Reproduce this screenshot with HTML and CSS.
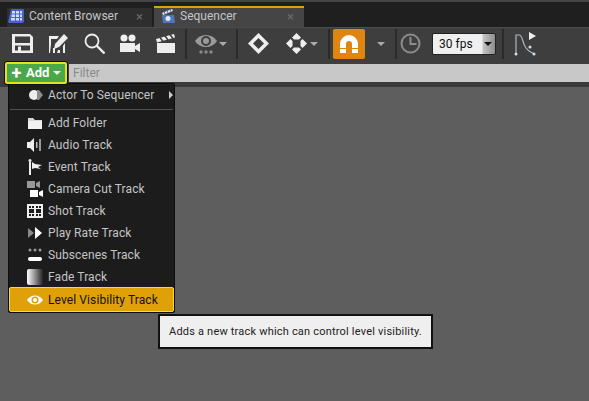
FILE: index.html
```html
<!DOCTYPE html>
<html>
  <head>
    <meta charset="utf-8" />
    <title>Sequencer</title>
    <link rel="stylesheet" href="styles.css">
  </head>

  <body>
    <!-- タブ -->
    <div class="tabbar">
      <div class="tab">
        <svg class="tab-icon" viewBox="0 0 16 16"><path d="M3 1h12l1 1v12l-1 1H1l-1-1z" fill="#4a62c8"/><path d="M4 3h3v2.500H4zM8 3h3v2.500H8zM12 3h2v2.500h-2zM3.500 6.500h3.500V9H3.500zM8 6.500h3V9H8zM12 6.500h2V9h-2zM3 10h4v2.500H3zM8 10h3v2.500H8zM12 10h2v2.500h-2z" fill="#d4ddf6"/></svg>
        <span class="tab-label">Content Browser</span>
        <span class="tab-close">×</span>
      </div>
      <div class="tab tab-active">
        <svg class="tab-icon" viewBox="0 0 16 16"><path d="M2 5l10-4 1 2-10 4z" fill="#e4e9f2"/><path d="M2 7h12l1 8H3z" fill="#4f78bc"/><circle cx="8" cy="10.500" r="2.500" fill="#e4e9f2"/><path d="M4 3l1 3M7 2l1 3M10 1l1 3" stroke="#4f78bc"/></svg>
        <span class="tab-label">Sequencer</span>
        <span class="tab-close">×</span>
      </div>
    </div>

    <!-- ツールバー -->
    <div class="toolbar">
      <svg class="tool" viewBox="0 0 21 21"><path d="M0 1h18l3 3v16H0zM3 3.500V10h15V3.500zM3 12.500V17.500h3v-4h3v4h9v-5z" fill="#eee" fill-rule="evenodd"/></svg>
      <svg class="tool gap-15" viewBox="0 0 21 21"><path d="M1 3h10l-2 3H3v5l-1 9H1zM12 20H9l1-3h2zM17 10v10h-2v-7zM5 15h2v5H5z" fill="#eee"/><path d="M7 11L16 1l4 4-9 9-5 2z" fill="#eee"/></svg>
      <svg class="tool gap-15" viewBox="0 0 21 21"><circle cx="8" cy="8" r="6.500" fill="none" stroke="#eee" stroke-width="1.800"/><path d="M12.500 12.500l8 8" stroke="#eee" stroke-width="2.400"/></svg>
      <svg class="tool gap-14" viewBox="0 0 21 21"><circle cx="5" cy="5" r="3.500" fill="#eee"/><circle cx="13" cy="5" r="3.500" fill="#eee"/><path d="M1 10h15v9H1zM16 13l5-3v9l-5-3z" fill="#eee"/></svg>
      <svg class="tool gap-15" viewBox="0 0 21 21"><path d="M2 10h18v10H2z" fill="#eee"/><path d="M1 6l18-5 1 3.500-18 5z" fill="#eee"/><path d="M5 4.500l3 4M10 3l3 4M15 1.500l3 4" stroke="#3e3e3e" stroke-width="1.500"/></svg>
      <span class="sep gap-9"></span>
      <svg class="tool tool-wide gap-8" viewBox="0 0 22 22"><path d="M0 8c5-8 17-8 22 0-5 8-17 8-22 0z" fill="#9a9a9a"/><circle cx="11" cy="8" r="5" fill="#3e3e3e"/><circle cx="11" cy="8" r="3" fill="#9a9a9a"/><circle cx="6" cy="19" r="1.700" fill="#8a8a8a"/><circle cx="11" cy="19" r="1.700" fill="#8a8a8a"/><circle cx="16" cy="19" r="1.700" fill="#8a8a8a"/></svg>
      <span class="caret caret-dim gap-2"></span>
      <span class="sep gap-9"></span>
      <svg class="tool gap-10" viewBox="0 0 21 21"><path d="M10.500 0L21 10.500 10.500 21 0 10.500zM10.500 5L5 10.500l5.500 5.500 5.500-5.500z" fill="#eee" fill-rule="evenodd"/></svg>
      <svg class="tool gap-17" viewBox="0 0 21 21"><path d="M10.500 0L15 4.500l-2 2h-5l-2-2zM4.500 6l2 2v5l-2 2L0 10.500zM16.500 6L21 10.500 16.500 15l-2-2V8zM8 14.500h5l2 2-4.500 4.500L6 16.500z" fill="#eee"/></svg>
      <span class="caret caret-dim gap-3"></span>
      <span class="sep gap-10"></span>
      <span class="snap gap-3">
        <svg viewBox="0 0 20 20" width="20" height="20"><path d="M1 19v-9a9 9 0 0 1 18 0v9h-6v-9a3 3 0 0 0-6 0v9z" fill="#fff"/><path d="M1 14h6v1H1zM13 14h6v1h-6z" fill="#e08512"/></svg>
      </span>
      <span class="caret caret-dim gap-12"></span>
      <span class="sep gap-10"></span>
      <svg class="tool gap-3" viewBox="0 0 21 21"><circle cx="10.500" cy="10.500" r="9" fill="none" stroke="#8c8c8c" stroke-width="2"/><path d="M10.500 4v7h6" fill="none" stroke="#8c8c8c" stroke-width="2"/></svg>
      <span class="fps gap-11">
        <span class="fps-value">30 fps</span>
        <span class="fps-arrow"></span>
      </span>
      <span class="sep gap-6"></span>
      <svg class="tool tool-curve gap-9" viewBox="0 0 24 24"><path d="M3 22V3h3c4 0 3 8 7 13 2 3 5 4 8 6" fill="none" stroke="#aeb8c0" stroke-width="1.200"/><path d="M16 0l7 4-7 4z" fill="#eee"/><circle cx="3" cy="22" r="1.500" fill="#cfe0ea"/><circle cx="21" cy="22" r="1.500" fill="#cfe0ea"/><circle cx="17" cy="15" r="1.500" fill="#cfe0ea"/></svg>
    </div>

    <!-- フィルター -->
    <div class="filterbar">
      <button class="add-button">
        <span class="add-plus">+</span>
        <span class="add-label">Add</span>
        <span class="caret"></span>
      </button>
      <div class="filter-input">Filter</div>
    </div>

    <div class="content"></div>

    <!-- メニュー -->
    <div class="menu">
      <div class="menu-item menu-item-first">
        <svg class="menu-icon" viewBox="0 0 16 16"><circle cx="7" cy="8" r="5" fill="#eee"/><path d="M10 3h2l4 5-4 5h-2z" fill="#8a8a8a"/></svg>
        <span class="menu-label">Actor To Sequencer</span>
        <span class="submenu-arrow"></span>
      </div>
      <div class="menu-divider"></div>
      <div class="menu-item">
        <svg class="menu-icon" viewBox="0 0 16 16"><path d="M1 3h5l2 2h7v9H1z" fill="#d8d8d8"/><path d="M1 6h14v8H1z" fill="#f0f0f0"/></svg>
        <span class="menu-label">Add Folder</span>
      </div>
      <div class="menu-item">
        <svg class="menu-icon" viewBox="0 0 16 16"><path d="M0 5h3l4-4v14l-4-4H0z" fill="#eee"/><path d="M9 5h1.500v6H9z" fill="#bbb"/><path d="M12 2h2v12h-2z" fill="#999"/></svg>
        <span class="menu-label">Audio Track</span>
      </div>
      <div class="menu-item">
        <svg class="menu-icon" viewBox="0 0 16 16"><circle cx="3" cy="1.500" r="1.500" fill="#eee"/><path d="M2 3h2v13H2z" fill="#eee"/><path d="M5 3l3 2 7 1-4 2 3 2-6-1-3 1z" fill="#eee"/></svg>
        <span class="menu-label">Event Track</span>
      </div>
      <div class="menu-item">
        <svg class="menu-icon" viewBox="0 0 16 16"><path d="M0 0h8v7H0zM9 2l4-2v7l-4-2z" fill="#999"/><path d="M3 9h8v7H3zM12 11l4-2v7l-4-2z" fill="#fff"/></svg>
        <span class="menu-label">Camera Cut Track</span>
      </div>
      <div class="menu-item">
        <svg class="menu-icon" viewBox="0 0 16 16"><path d="M0 1h16v14H0zM2 3v2h2V3zM5 3v2h2V3zM9 3v2h2V3zM12 3v2h2V3zM2 6v4h5V6zM9 6v4h5V6zM2 11v2h2v-2zM5 11v2h2v-2zM9 11v2h2v-2zM12 11v2h2v-2z" fill="#eee" fill-rule="evenodd"/></svg>
        <span class="menu-label">Shot Track</span>
      </div>
      <div class="menu-item">
        <svg class="menu-icon" viewBox="0 0 16 16"><path d="M1 3l6 5-6 5z" fill="#888"/><path d="M8 2l7 6-7 6z" fill="#fff"/></svg>
        <span class="menu-label">Play Rate Track</span>
      </div>
      <div class="menu-item">
        <svg class="menu-icon" viewBox="0 0 16 16"><circle cx="3" cy="3" r="1.500" fill="#999"/><circle cx="8" cy="3" r="1.500" fill="#999"/><circle cx="13" cy="3" r="1.500" fill="#999"/><rect x="1" y="10" width="14" height="4" rx="2" fill="#fff"/></svg>
        <span class="menu-label">Subscenes Track</span>
      </div>
      <div class="menu-item">
        <span class="fade-icon"></span>
        <span class="menu-label">Fade Track</span>
      </div>
      <div class="menu-item menu-item-active">
        <svg class="menu-icon" viewBox="0 0 16 16"><path d="M0 8c4-6 12-6 16 0-4 6-12 6-16 0z" fill="#fff"/><circle cx="8" cy="8" r="3.500" fill="#e0a008"/><circle cx="8" cy="8" r="2" fill="#fff"/></svg>
        <span class="menu-label">Level Visibility Track</span>
      </div>
    </div>

    <!-- ツールチップ -->
    <div class="tooltip">Adds a new track which can control level visibility.</div>
  </body>
</html>
```

FILE: styles.css
```css
* {
  box-sizing: border-box;
}

html, body {
  height: 100%;
}

body {
  margin: 0;
  overflow: hidden;
  display: flex;
  flex-direction: column;
  font-family: Roboto, sans-serif;
  background-color: #5e5e5e;
}

/* タブ */
.tabbar {
  height: 27px;
  flex: none;
  display: flex;
  align-items: flex-end;
  gap: 2px;
  padding-left: 7px;
  background-color: #1f1f1f;
  border-top: 2px solid #454545;
}

.tab {
  width: 145px;
  height: 19px;
  display: flex;
  align-items: center;
  padding: 0 0 3px 1px;
  background-color: #2e2e2e;
  color: #c4c4c4;
  font-size: 12px;
}

.tab-active {
  width: 150px;
  height: 21px;
  padding-left: 6px;
  background-color: #454545;
  border-top: 2px solid #e0a008;
}

.tab-icon {
  width: 16px;
  height: 16px;
  margin-right: 5px;
}

.tab-active .tab-icon {
  margin-right: 4px;
}

.tab-label {
  flex: 1;
}

.tab-close {
  color: #6c6c6c;
  font-size: 13px;
  margin-right: 9px;
}

.tab-active .tab-close {
  margin-right: 10px;
}

/* ツールバー */
.toolbar {
  height: 36px;
  flex: none;
  display: flex;
  align-items: center;
  padding: 0 0 4px 12px;
  background-color: #3e3e3e;
  border-top: 1px solid #4c4c4c;
}

.tool {
  width: 21px;
  height: 21px;
  flex: none;
}

.tool-wide {
  width: 22px;
  height: 22px;
}

.tool-curve {
  width: 24px;
  height: 24px;
}

.gap-2 { margin-left: 2px; }
.gap-3 { margin-left: 3px; }
.gap-6 { margin-left: 6px; }
.gap-8 { margin-left: 8px; }
.gap-9 { margin-left: 9px; }
.gap-10 { margin-left: 10px; }
.gap-11 { margin-left: 11px; }
.gap-12 { margin-left: 12px; }
.gap-14 { margin-left: 14px; }
.gap-15 { margin-left: 15px; }
.gap-17 { margin-left: 17px; }

.sep {
  width: 2px;
  height: 30px;
  flex: none;
  background-color: #2a2a2a;
}

.caret {
  display: inline-block;
  width: 0;
  height: 0;
  flex: none;
  border-left: 4px solid transparent;
  border-right: 4px solid transparent;
  border-top: 4px solid #eee;
}

.caret-dim {
  border-top-color: #aaa;
}

.snap {
  width: 32px;
  height: 30px;
  flex: none;
  display: flex;
  align-items: center;
  justify-content: center;
  background-color: #e08512;
  border-radius: 2px;
}

.fps {
  width: 64px;
  height: 22px;
  flex: none;
  display: flex;
  align-items: center;
  background: linear-gradient(to right, #f0f0f0 49px, #c4c4c4 50px, #8c8c8c);
  border: 1px solid #222;
  border-radius: 2px;
  color: #111;
  font-size: 12px;
}

.fps-value {
  flex: 1;
  padding-left: 6px;
}

.fps-arrow {
  margin-right: 3px;
  border-left: 4px solid transparent;
  border-right: 4px solid transparent;
  border-top: 4px solid #111;
}

/* フィルター */
.filterbar {
  height: 19px;
  flex: none;
  display: flex;
  align-items: center;
  gap: 2px;
  padding-left: 5px;
  background-color: #3e3e3e;
}

.add-button {
  width: 62px;
  height: 22px;
  flex: none;
  position: relative;
  z-index: 2;
  display: flex;
  align-items: center;
  padding: 0 0 0 4px;
  background-color: #4aa84a;
  border: 2px solid #e8e020;
  border-radius: 2px;
  box-shadow: 0 0 0 1px #111;
  color: #fff;
  font-family: Roboto, sans-serif;
  font-size: 13px;
  font-weight: bold;
}

.add-plus {
  width: 11px;
  margin-right: 4px;
  font-size: 18px;
  line-height: 16px;
}

.add-label {
  margin-right: 4px;
}

.filter-input {
  flex: 1;
  height: 18px;
  padding-left: 4px;
  background-color: #c8c8c8;
  color: #8a8a8a;
  font-size: 12px;
  line-height: 18px;
}

.content {
  flex: 1;
  background-color: #5e5e5e;
  border-top: 5px solid #3a3a3a;
}

/* メニュー */
.menu {
  position: absolute;
  top: 83px;
  left: 8px;
  width: 167px;
  height: 230px;
  background-color: #1c1c1c;
  border: 1px solid #0c0c0c;
  border-radius: 2px;
}

.menu-item {
  height: 22px;
  display: flex;
  align-items: center;
  padding-left: 18px;
  color: #c4c4c4;
  font-size: 12px;
  letter-spacing: 0.1px;
}

.menu-item-first {
  height: 21px;
}

.menu-icon, .fade-icon {
  width: 16px;
  height: 16px;
  flex: none;
  margin-right: 5px;
}

.fade-icon {
  background: linear-gradient(to right, #fff, #222);
  border-radius: 2px;
}

.menu-label {
  flex: 1;
}

.submenu-arrow {
  margin-right: 1px;
  border-top: 4px solid transparent;
  border-bottom: 4px solid transparent;
  border-left: 4px solid #ccc;
}

.menu-divider {
  height: 1px;
  margin: 4px 1px 2px;
  background-color: #505050;
}

.menu-item-active {
  height: 25px;
  margin-top: -1px;
  padding-left: 17px;
  background-color: #e0a008;
  border: 1px solid #f4e020;
  border-radius: 2px;
  color: #111;
}

/* ツールチップ */
.tooltip {
  position: absolute;
  top: 314px;
  left: 158px;
  width: 275px;
  height: 35px;
  padding-left: 9px;
  background-color: #efefef;
  border: 2px solid #111;
  color: #222;
  font-size: 11px;
  letter-spacing: 0.2px;
  line-height: 31px;
}
```
